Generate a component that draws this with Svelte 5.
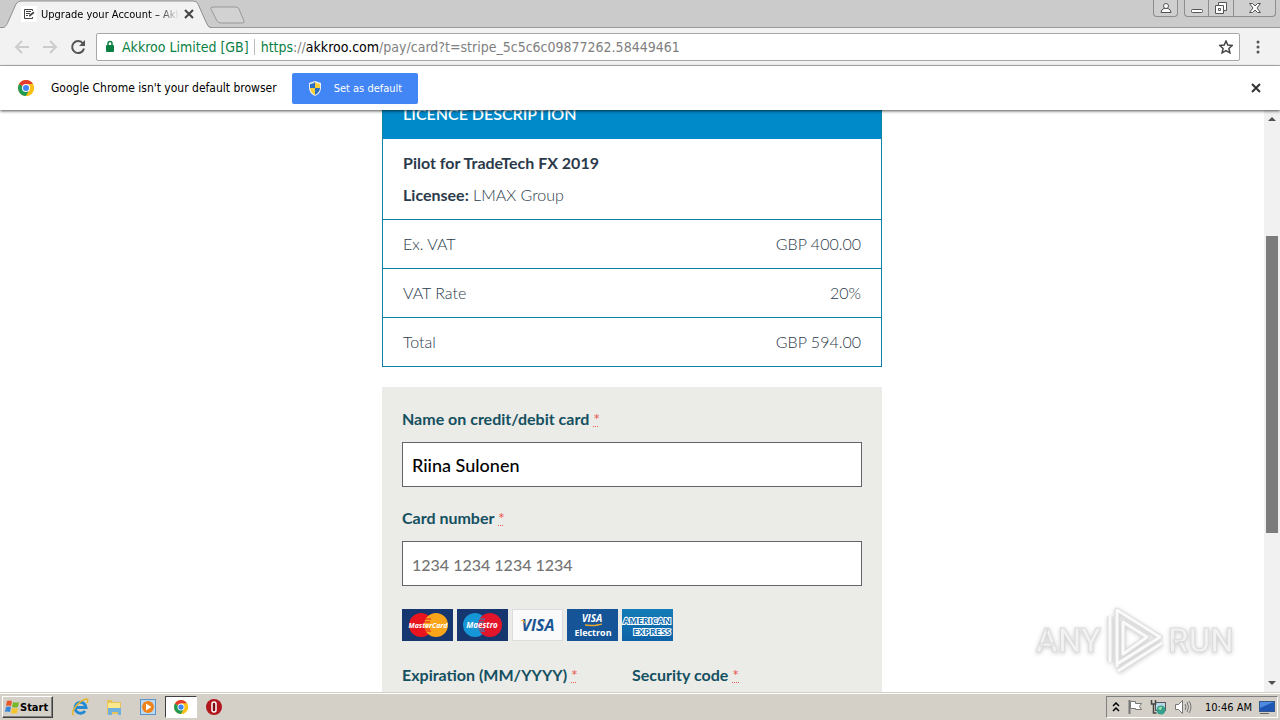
<script lang="ts">
  interface Row {
    label: string;
    value: string;
  }

  const rows: Row[] = [
    { label: 'Ex. VAT', value: 'GBP 400.00' },
    { label: 'VAT Rate', value: '20%' },
    { label: 'Total', value: 'GBP 594.00' },
  ];

  let cardName = $state('Riina Sulonen');
  let cardNumber = $state('');
</script>

{#snippet chromeLogo(size: number)}
  <svg width={size} height={size} viewBox="0 0 16 16" aria-hidden="true">
    <circle cx="8" cy="8" r="8" fill="#fbc116" />
    <path d="M8 8 1.1 4A8 8 0 0 0 8 16l3.5-6z" fill="#219a55" />
    <path d="M8 8 1.1 4A8 8 0 0 1 14.9 4H8z" fill="#e33b2e" />
    <path d="M8 4h6.9A8 8 0 0 1 8 16l3.5-6z" fill="#fbc116" />
    <circle cx="8" cy="8" r="4" fill="#fff" />
    <circle cx="8" cy="8" r="3" fill="#4285f4" />
  </svg>
{/snippet}

<div class="screen">
  <header class="tab-strip">
    <div class="tab">
      <svg class="tab-shape" width="212" height="28" viewBox="0 0 212 28" aria-hidden="true">
        <path d="M0 28C5 28 6 26 8 22L16 4Q18 1 21 1H193Q197 1 198 4L206 22Q208 28 212 28" fill="#f2f2f2" stroke="#8f8f8f" />
      </svg>
      <svg class="favicon" width="16" height="16" viewBox="0 0 16 16" aria-hidden="true">
        <rect width="16" height="16" fill="#fff" />
        <path d="M11.500 5V3.500h-8v9h8V11M5 5.500h5M5 7.500h4M5 9.500h2" fill="none" stroke="#444" />
        <path d="m8 9 4.500-3.500 1 1.500L9 10.500H8z" fill="#444" />
      </svg>
      <span class="tab-title">Upgrade your Account – Akk</span>
      <button class="icon-button tab-close" aria-label="Close tab">
        <svg width="10" height="10" viewBox="0 0 10 10"><path d="m1 1 8 8M9 1 1 9" stroke="#444" stroke-width="2" /></svg>
      </button>
    </div>
    <button class="icon-button new-tab" aria-label="New tab">
      <svg width="36" height="18" viewBox="0 0 36 18">
        <path d="M3 1h23q2 0 3 2l5 12q1 2-2 2H11q-3 0-4-2L1 3q-1-2 2-2z" fill="#d2d2d2" stroke="#999" />
      </svg>
    </button>
    <div class="window-buttons">
      <button class="win user" aria-label="User">
        <svg width="12" height="12" viewBox="0 0 12 12" fill="#fff" stroke="#555"><path d="M1 10.500q0-3 3-4h4q3 1 3 4z" /><circle cx="6" cy="4" r="2.500" /></svg>
      </button>
      <button class="win" aria-label="Minimize">
        <svg width="14" height="12" viewBox="0 0 14 12"><rect x="1.500" y="7.500" width="11" height="3" rx="1" fill="#fff" stroke="#555" /></svg>
      </button>
      <button class="win" aria-label="Restore">
        <svg width="14" height="14" viewBox="0 0 14 14" fill="#fff" stroke="#555"><path d="M4.500 1.500h8v8h-8z" /><path d="M1.500 4.500h8v8h-8z" /><path d="M4.500 7.500h2v2h-2z" /></svg>
      </button>
      <button class="win wide" aria-label="Close window">
        <svg width="14" height="12" viewBox="0 0 14 12"><path d="M1.500 1.500h3L7 4l2.500-2.500h3L9 6l3.500 4.500h-3L7 8l-2.500 2.500h-3L5 6z" fill="#fff" stroke="#555" /></svg>
      </button>
    </div>
  </header>

  <nav class="toolbar">
    <button class="icon-button" aria-label="Back">
      <svg width="16" height="16" viewBox="0 0 16 16"><path d="M15 8H2m6-6L2 8l6 6" fill="none" stroke="#ccc" stroke-width="2" /></svg>
    </button>
    <button class="icon-button" aria-label="Forward">
      <svg width="16" height="16" viewBox="0 0 16 16"><path d="M1 8h13M8 2l6 6-6 6" fill="none" stroke="#ccc" stroke-width="2" /></svg>
    </button>
    <button class="icon-button" aria-label="Reload">
      <svg width="16" height="16" viewBox="0 0 16 16"><path d="M13 4.500A6 6 0 1 0 14 9.500" fill="none" stroke="#555" stroke-width="2" /><path d="M15 1v6H9z" fill="#555" /></svg>
    </button>
    <div class="omnibox">
      <svg width="10" height="13" viewBox="0 0 10 13" aria-hidden="true">
        <rect x="1" y="5" width="8" height="7" rx="1" fill="#0b8043" />
        <path d="M3 6V3.500a2 2 0 0 1 4 0V6" fill="none" stroke="#0b8043" stroke-width="1.500" />
      </svg>
      <span class="secure">Akkroo Limited [GB]</span>
      <div class="url" role="textbox" tabindex="0" aria-label="Address"><span class="scheme">https</span>://<span class="host">akkroo.com</span>/pay/card?t=stripe_5c5c6c09877262.58449461</div>
      <button class="icon-button" aria-label="Bookmark this page">
        <svg width="14" height="14" viewBox="0 0 14 14"><path d="m7 1 1.800 4.100 4.400.4-3.300 2.900 1 4.400L7 10.500l-3.900 2.300 1-4.400L.8 5.500l4.400-.4z" fill="none" stroke="#444" stroke-width="1.500" /></svg>
      </button>
    </div>
    <button class="icon-button" aria-label="Menu">
      <svg width="4" height="14" viewBox="0 0 4 14" fill="#555"><circle cx="2" cy="2" r="1.500" /><circle cx="2" cy="7" r="1.500" /><circle cx="2" cy="12" r="1.500" /></svg>
    </button>
  </nav>

  <div class="infobar">
    {@render chromeLogo(16)}
    <span class="info-text">Google Chrome isn't your default browser</span>
    <button class="set-default">
      <svg width="14" height="15" viewBox="0 0 14 15" aria-hidden="true">
        <path d="M7 0 13 2v5q0 5-6 8Q1 12 1 7V2z" fill="#eee" />
        <path d="M7 1v6H2V3q3 0 5-2z" fill="#2b6fc4" />
        <path d="M7 1v6h5V3Q9 3 7 1z" fill="#f8cf3a" />
        <path d="M2 7h5v7Q2 11 2 7z" fill="#f8cf3a" />
        <path d="M7 7h5q0 4-5 7z" fill="#2b6fc4" />
      </svg>
      Set as default
    </button>
    <button class="icon-button info-close" aria-label="Dismiss">
      <svg width="10" height="10" viewBox="0 0 10 10"><path d="m1 1 8 8M9 1 1 9" stroke="#333" stroke-width="2" /></svg>
    </button>
  </div>

  <div class="viewport">
    <main class="page">
      <div class="content">
        <table class="licence">
          <thead>
            <tr><th colspan="2">Licence description</th></tr>
          </thead>
          <tbody>
            <tr>
              <td colspan="2">
                <strong>Pilot for TradeTech FX 2019</strong><br />
                <strong>Licensee:</strong> LMAX Group
              </td>
            </tr>
            {#each rows as row (row.label)}
              <tr>
                <td>{row.label}</td>
                <td class="amount">{row.value}</td>
              </tr>
            {/each}
          </tbody>
        </table>

        <form class="payment">
          <label for="card-name">Name on credit/debit card <abbr title="required">*</abbr></label>
          <input id="card-name" type="text" bind:value={cardName} />
          <label for="card-number">Card number <abbr title="required">*</abbr></label>
          <input id="card-number" type="text" placeholder="1234 1234 1234 1234" bind:value={cardNumber} />

          <div class="cards">
            <svg width="51" height="32" viewBox="0 0 51 32" role="img" aria-label="MasterCard">
              <rect width="51" height="32" fill="#16366f" />
              <circle cx="19" cy="16" r="12" fill="#e9141d" />
              <circle cx="34" cy="16" r="12" fill="#f9a51a" />
              <path d="M23 10h6M22 13h6M22 20h6M23 22h6" stroke="#e9141d" />
              <text x="26" y="19" class="brand" font-size="7" font-style="italic">MasterCard</text>
            </svg>
            <svg width="51" height="32" viewBox="0 0 51 32" role="img" aria-label="Maestro">
              <rect width="51" height="32" fill="#16366f" />
              <circle cx="18" cy="16" r="12" fill="#1596d7" />
              <circle cx="33" cy="16" r="12" fill="#e2152b" />
              <path d="M22 10h6M21 13h6M21 20h6M22 22h6" stroke="#1596d7" />
              <text x="25" y="19" class="brand" font-size="8" font-style="italic">Maestro</text>
            </svg>
            <svg width="51" height="32" viewBox="0 0 51 32" role="img" aria-label="Visa">
              <rect x=".5" y=".5" width="50" height="31" fill="#fafafa" stroke="#ddd" />
              <text x="26" y="22" class="brand visa" font-size="16" font-style="italic">VISA</text>
              <path d="M8 11h4l2 5q-2-4-6-5z" fill="#f0a92c" />
            </svg>
            <svg width="51" height="32" viewBox="0 0 51 32" role="img" aria-label="Visa Electron">
              <rect width="51" height="32" fill="#145497" />
              <text x="25" y="13" class="brand" font-size="10" font-style="italic">VISA</text>
              <path d="M18 16q10 1 17-1-7 3-17 1z" fill="#f0a92c" stroke="#f0a92c" />
              <text x="26" y="27" class="brand" font-size="9">Electron</text>
            </svg>
            <svg width="51" height="32" viewBox="0 0 51 32" role="img" aria-label="American Express">
              <defs>
                <linearGradient id="amex" x2="0" y2="1"><stop stop-color="#147cb8" /><stop offset="1" stop-color="#0e62a5" /></linearGradient>
              </defs>
              <rect width="51" height="32" fill="url(#amex)" />
              <text x="25" y="15" class="brand amex" font-size="9">AMERICAN</text>
              <text x="30" y="26" class="brand amex" font-size="9">EXPRESS</text>
            </svg>
          </div>

          <div class="split">
            <label for="expiry">Expiration (MM/YYYY) <abbr title="required">*</abbr></label>
            <label for="cvc">Security code <abbr title="required">*</abbr></label>
            <input id="expiry" type="text" />
            <input id="cvc" type="text" />
          </div>
        </form>
      </div>
    </main>

    <div class="scrollbar" aria-hidden="true">
      <svg width="16" height="17" viewBox="0 0 16 17"><path d="m4 11 4-4 4 4z" fill="#505050" /></svg>
      <div class="track-above"></div>
      <div class="thumb"></div>
      <div class="track-below"></div>
      <svg width="16" height="17" viewBox="0 0 16 17"><path d="m4 6 4 4 4-4z" fill="#505050" /></svg>
    </div>

    <svg class="watermark" width="210" height="76" viewBox="0 0 210 76" role="img" aria-label="ANY RUN">
      <text x="6" y="50">ANY</text>
      <g fill="none" stroke-linejoin="round">
        <path d="M87 65V8l43 27-43 27M80 60V14M88 69l44-28M93 20v32l24-17z" stroke="#dcdcdc" stroke-width="5" />
        <path d="M87 65V8l43 27-43 27M80 60V14M88 69l44-28M93 20v32l24-17z" stroke="#fafafa" stroke-width="3" />
      </g>
      <text x="138" y="50">RUN</text>
    </svg>
  </div>

  <footer class="taskbar">
    <button class="start">
      <svg width="16" height="16" viewBox="0 0 16 16" aria-hidden="true">
        <path d="M3 2q3-1 5 0L7 7Q4 6 2 7z" fill="#e8562a" />
        <path d="M9 3q3 1 6 0l-1 5q-3 1-6 0z" fill="#76b82a" />
        <path d="M2 8q2-1 5 0l-1 5q-3-1-5 0z" fill="#3a86d8" />
        <path d="M8 9q3 1 6 0l-1 5q-3 1-6 0z" fill="#f7c52b" />
      </svg>
      Start
    </button>
    <div class="quick">
      <button class="task" aria-label="Internet Explorer">
        <svg width="18" height="18" viewBox="0 0 18 18"><path d="M14 13a5.500 5.500 0 1 1 1-3.500H5" fill="none" stroke="#2389d3" stroke-width="3" /><path d="M3 17Q0 16 3 11 8 3 15 1q3 0 1 4" fill="none" stroke="#e5b52c" stroke-width="1.500" /></svg>
      </button>
      <button class="task" aria-label="Explorer">
        <svg width="18" height="18" viewBox="0 0 18 18"><path d="M2 2h5l1 2h8v12H2z" fill="#e6c25a" /><path d="M3 5h12v5H3z" fill="#fbe88c" /><path d="M3 10h13v7h-3v-3H7v3H3z" fill="#6fb1dc" /></svg>
      </button>
      <button class="task" aria-label="Media Player">
        <svg width="18" height="18" viewBox="0 0 18 18"><rect x="1.500" y="1.500" width="15" height="15" fill="#bcd9f2" stroke="#5b93c8" /><circle cx="9" cy="9" r="6" fill="#ef8218" /><path d="m7 5.500 5.500 3.500L7 12.500z" fill="#fff" /></svg>
      </button>
      <button class="task active" aria-label="Google Chrome">{@render chromeLogo(14)}</button>
      <button class="task" aria-label="Opera">
        <svg width="18" height="18" viewBox="0 0 18 18"><circle cx="9" cy="9" r="8" fill="#b3151c" /><rect x="7" y="4" width="4" height="10" rx="2" fill="#7d0d12" stroke="#fff" stroke-width="1.500" /></svg>
      </button>
    </div>
    <div class="tray">
      <svg width="8" height="10" viewBox="0 0 8 10"><path d="m1 4 3-3 3 3M1 9l3-3 3 3" fill="none" stroke="#000" stroke-width="1.500" /></svg>
      <svg width="16" height="16" viewBox="0 0 16 16"><path d="M2.500 1v14" stroke="#777" stroke-width="2" /><path d="M3.500 2.500h5v2h6l-2 3 2 3h-6v-1h-5z" fill="#fff" stroke="#777" /></svg>
      <svg width="17" height="16" viewBox="0 0 17 16"><rect x="5.500" y="3.500" width="10" height="8" fill="#b9d9ea" stroke="#555" /><path d="M1.500 1v4h4V1M3.500 5v9h3" fill="none" stroke="#444" stroke-width="1.500" /><circle cx="11" cy="11" r="4.500" fill="#36a08c" /><path d="M8 10q2-3 4-2l-1 3z" fill="#a5e0b0" /></svg>
      <svg width="18" height="16" viewBox="0 0 18 16" fill="none" stroke="#777"><path d="M1.500 5.500h3l4-4v13l-4-4h-3z" fill="#fff" /><path d="M11 5q2 3 0 6M13 3q3 5 0 10M15 2q4 6 0 12" /></svg>
      <time>10:46 AM</time>
      <svg width="16" height="15" viewBox="0 0 16 15"><rect x=".5" y="1.500" width="15" height="10" fill="#1d56b4" stroke="#34588a" /><path d="M1 2h14L1 8z" fill="#4b8ade" /><path d="M1 13.500h9" stroke="#666" /></svg>
    </div>
  </footer>
</div>

<style>
  :global(body) {
    margin: 0;
    overflow: hidden;
  }

  .screen {
    display: flex;
    flex-direction: column;
    height: 100vh;
    background: #fff;
    font-family: 'DejaVu Sans Condensed', 'DejaVu Sans', sans-serif;
    font-size: 12px;
    color: #000;
  }

  button {
    font: inherit;
    color: inherit;
    padding: 0;
    margin: 0;
  }

  svg {
    display: block;
    flex: none;
  }

  .icon-button {
    border: 0;
    background: none;
    flex: none;
  }

  .tab-strip {
    display: flex;
    flex: none;
    height: 28px;
    background: #cbcbcb;
    box-shadow: inset 0 -1px #999;
  }

  .tab {
    position: relative;
    display: flex;
    align-items: center;
    box-sizing: border-box;
    width: 206px;
    margin-right: 4px;
    padding-left: 21px;
    font-size: 11px;
  }

  .tab-shape {
    position: absolute;
    left: 0;
    top: 0;
  }

  .favicon,
  .tab-title,
  .tab-close {
    position: relative;
  }

  .tab-title {
    width: 138px;
    margin: 0 5px 0 4px;
    overflow: hidden;
    white-space: nowrap;
    mask-image: linear-gradient(to right, #000 116px, transparent);
  }

  .new-tab {
    align-self: flex-start;
    padding-top: 6px;
  }

  .window-buttons {
    display: flex;
    align-items: flex-start;
    margin-left: auto;
    padding-right: 4px;
  }

  .win {
    display: flex;
    align-items: center;
    justify-content: center;
    width: 25px;
    height: 17px;
    border: 1px solid #8d8d8d;
    border-width: 0 1px 1px 0;
    background: #cfcfcf;
  }

  .win.user {
    margin-right: 6px;
    border-left-width: 1px;
    border-radius: 0 0 4px 4px;
  }

  .user + .win {
    border-left-width: 1px;
    border-radius: 0 0 0 4px;
  }

  .win.wide {
    width: 42px;
    border-radius: 0 0 4px 0;
  }

  .toolbar {
    display: flex;
    flex: none;
    align-items: center;
    gap: 12px;
    box-sizing: border-box;
    height: 38px;
    padding: 0 20px 0 14px;
    background: #f2f2f2;
    border-bottom: 1px solid #b6b6b6;
  }

  .omnibox {
    display: flex;
    flex: 1;
    align-items: center;
    box-sizing: border-box;
    height: 28px;
    margin: 0 4px 0 -2px;
    padding: 0 6px 0 8px;
    border: 1px solid #a8a8a8;
    border-radius: 2px;
    background: #fff;
    font-size: 14px;
    white-space: nowrap;
  }

  .secure {
    margin-left: 7px;
    padding-right: 5px;
    border-right: 1px solid #bbb;
    line-height: 16px;
    color: #0b8043;
  }

  .url {
    flex: 1;
    padding-left: 6px;
    color: #808080;
    outline: 0;
  }

  .scheme {
    color: #0b8043;
  }

  .host {
    color: #000;
  }

  .infobar {
    position: relative;
    z-index: 1;
    display: flex;
    flex: none;
    align-items: center;
    box-sizing: border-box;
    height: 44px;
    padding: 0 19px 0 18px;
    background: #fff;
    box-shadow: 0 1px 3px rgba(0, 0, 0, 0.7);
  }

  .info-text {
    margin: 0 15px 0 17px;
  }

  .set-default {
    display: flex;
    align-items: center;
    gap: 12px;
    height: 31px;
    padding: 0 16px;
    border: 0;
    border-radius: 2px;
    background: #4285f4;
    color: #fff;
    font-size: 11px;
  }

  .info-close {
    margin-left: auto;
  }

  .viewport {
    position: relative;
    display: flex;
    flex: 1;
    min-height: 0;
    overflow: hidden;
  }

  .page {
    flex: 1;
    overflow: hidden;
    font-family: Lato, 'Open Sans', sans-serif;
    font-size: 16px;
    color: #2b3a4a;
  }

  /* The page is scrolled, so the top of the table sits under the infobar */
  .content {
    max-width: 500px;
    margin: -21px auto 0;
  }

  .licence {
    width: 100%;
    border: 1px solid #0f82a8;
    border-spacing: 0;
    line-height: 32px;
    font-weight: 300;
  }

  .licence strong {
    font-weight: 700;
  }

  .licence th {
    padding: 8px 20px;
    background: #008aca;
    border-bottom: 1px solid #008aca;
    color: #fff;
    font-weight: 600;
    text-align: left;
    text-transform: uppercase;
  }

  .licence td {
    padding: 8px 20px;
    border-bottom: 1px solid #0f82a8;
  }

  .licence tr:last-child td {
    border-bottom: 0;
  }

  .licence .amount {
    text-align: right;
  }

  .payment {
    margin-top: 20px;
    padding: 20px;
    background: #ebebe8;
  }

  .payment label {
    display: block;
    margin-bottom: 11px;
    line-height: 24px;
    font-weight: 700;
    color: #14505f;
  }

  abbr {
    color: #e8594f;
    font-weight: 400;
    text-decoration: underline dotted 1px;
  }

  .payment input {
    display: block;
    box-sizing: border-box;
    width: 100%;
    height: 45px;
    margin: 0 0 19px;
    padding: 0 9px;
    border: 1px solid #62666b;
    border-radius: 0;
    background: #fff;
    font: 500 18px Lato, 'Open Sans', sans-serif;
    color: #000;
  }

  .payment input::placeholder {
    font-size: 16px;
    color: #757575;
  }

  .cards {
    display: flex;
    gap: 4px;
    margin: 23px 0 22px;
  }

  .brand {
    fill: #fff;
    font-family: 'Open Sans', sans-serif;
    font-weight: 700;
    text-anchor: middle;
  }

  .brand.visa {
    fill: #1c5595;
  }

  .brand.amex {
    fill: #1470b0;
    stroke: #fff;
    stroke-width: 2px;
    paint-order: stroke;
  }

  .split {
    display: grid;
    grid-template-columns: 1fr 1fr;
  }

  .scrollbar {
    display: flex;
    flex: none;
    flex-direction: column;
    width: 16px;
    background: #f1f1f1;
  }

  .track-above {
    flex: 109;
  }

  .thumb {
    flex: 297;
    margin: 0 2px;
    background: #7c7c7c;
  }

  .track-below {
    flex: 142;
  }

  .watermark {
    position: absolute;
    right: 40px;
    bottom: 14px;
    filter: drop-shadow(0 1px 2px rgba(0, 0, 0, 0.2));
  }

  .watermark text {
    fill: #f2f2f2;
    stroke: #dcdcdc;
    font-family: Roboto, sans-serif;
    font-size: 33px;
    font-weight: 500;
  }

  .taskbar {
    display: flex;
    flex: none;
    align-items: center;
    box-sizing: border-box;
    height: 28px;
    padding: 2px 2px 0;
    background: #d4d0c8;
    box-shadow: inset 0 1px #d4d0c8, inset 0 2px #fff;
    font-size: 11px;
  }

  .start {
    display: flex;
    align-items: center;
    height: 22px;
    padding: 0 4px 0 1px;
    border: 1px solid;
    border-color: #fff #404040 #404040 #fff;
    background: #d4d0c8;
    box-shadow: inset -1px -1px #808080;
    font-weight: 700;
  }

  .quick {
    display: flex;
    margin-left: 10px;
  }

  .task {
    display: flex;
    align-items: center;
    justify-content: center;
    box-sizing: border-box;
    width: 34px;
    height: 22px;
    border: 0;
    background: none;
  }

  .task.active {
    width: 32px;
    border: 1px solid;
    border-color: #404040 #fff #fff #404040;
    background: #fff;
  }

  .tray {
    display: flex;
    align-items: center;
    gap: 7px;
    box-sizing: border-box;
    height: 22px;
    margin-left: auto;
    padding: 0 2px 0 5px;
    border: 1px solid;
    border-color: #808080 #fff #fff #808080;
  }

  time {
    margin-left: 6px;
  }
</style>
